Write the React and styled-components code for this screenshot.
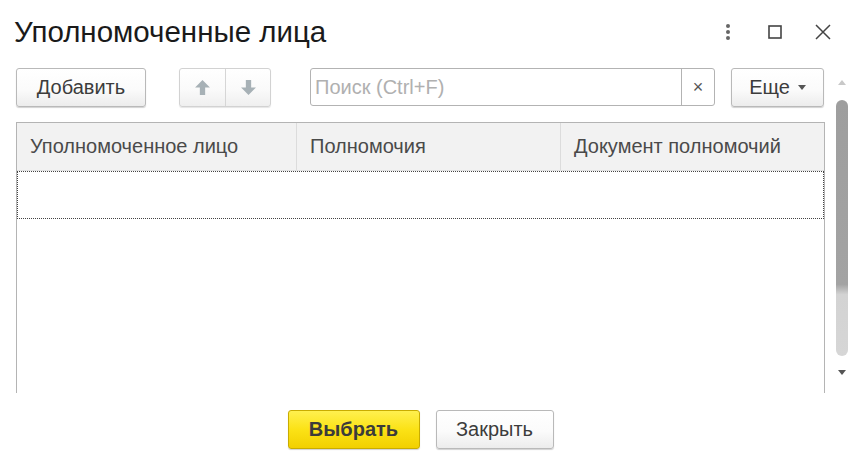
import React from "react";
import styled, { createGlobalStyle } from "styled-components";

const Global = createGlobalStyle`
  html, body { margin: 0; padding: 0; background: #fff; }
  body { font-family: "Liberation Sans", Arial, sans-serif; color: #333; }
  * { box-sizing: border-box; }
`;

const Window = styled.div`
  width: 853px;
  height: 470px;
  display: flex;
  flex-direction: column;
  background: #fff;
  overflow: hidden;
`;

const TitleBar = styled.div`
  height: 68px;
  display: flex;
  align-items: flex-start;
  padding: 14px 0 0 14px;
`;

const Title = styled.h1`
  margin: 0;
  flex: 1;
  font-weight: normal;
  font-size: 29.5px;
  line-height: 36px;
  color: #1a1a1a;
`;

const Controls = styled.div`
  display: flex;
  align-items: center;
  height: 36px;
  padding-right: 6px;
`;

const CtrlBtn = styled.div`
  width: ${(p) => p.$w || 48}px;
  height: 36px;
  display: flex;
  align-items: center;
  justify-content: center;
`;

const Main = styled.div`
  display: flex;
  height: 325px;
`;

const LeftCol = styled.div`
  width: 825px;
  padding-left: 16px;
  display: flex;
  flex-direction: column;
`;

const Toolbar = styled.div`
  height: 39px;
  display: flex;
  align-items: stretch;
`;

const Button = styled.button`
  height: 39px;
  padding: 0 ${(p) => p.$px || 10}px;
  margin-left: ${(p) => p.$ml || 0}px;
  border: 1px solid #b9b9b9;
  border-radius: 3px;
  background: linear-gradient(#ffffff 0%, #fbfbfb 55%, #ececec 100%);
  box-shadow: 0 1px 1px rgba(0, 0, 0, 0.18);
  font-family: inherit;
  font-size: 20px;
  color: #3c3c3c;
  display: flex;
  align-items: center;
  justify-content: center;
  gap: 8px;
  cursor: default;
  width: ${(p) => (p.$w ? p.$w + "px" : "auto")};
`;

const PrimaryButton = styled(Button)`
  background: linear-gradient(#fff04f 0%, #fbe216 50%, #f2d000 100%);
  border-color: #c9ac00;
  font-weight: bold;
  color: #3b3b3b;
`;

const Group = styled.div`
  margin-left: 33px;
  display: flex;
  height: 39px;
  border: 1px solid #d2d2d2;
  border-radius: 3px;
  background: linear-gradient(#ffffff 0%, #fafafa 55%, #efefef 100%);
  box-shadow: 0 1px 1px rgba(0, 0, 0, 0.1);
`;

const GroupItem = styled.div`
  width: 45px;
  display: flex;
  align-items: center;
  justify-content: center;
  & + & { border-left: 1px solid #d6d6d6; }
`;

const Search = styled.div`
  margin-left: 39px;
  width: 405px;
  height: 38px;
  display: flex;
  border: 1px solid #b3b3b3;
  border-radius: 3px;
  background: #fff;
`;

const SearchInput = styled.input`
  flex: 1;
  min-width: 0;
  border: none;
  outline: none;
  padding: 0 4px;
  font-family: inherit;
  font-size: 20px;
  color: #333;
  background: transparent;
  &::placeholder { color: #b0b0b0; }
`;

const ClearBtn = styled.div`
  width: 33px;
  border-left: 1px solid #b3b3b3;
  display: flex;
  align-items: center;
  justify-content: center;
  color: #555;
  font-size: 18px;
`;

const Table = styled.div`
  margin-top: 15px;
  flex: 1;
  border: 1px solid #b4b4b4;
  border-bottom: none;
  display: flex;
  flex-direction: column;
`;

const HeadRow = styled.div`
  display: grid;
  grid-template-columns: 279px 264px 1fr;
  height: 48px;
  background: #f2f2f2;
  border-bottom: 1px solid #e0e0e0;
`;

const HeadCell = styled.div`
  display: flex;
  align-items: center;
  padding-left: 13px;
  font-size: 20px;
  color: #4a4a4a;
  & + & { border-left: 1px solid #dcdcdc; }
`;

const Row = styled.div`
  height: 48px;
  border: 1px dotted #444;
`;

const ScrollCol = styled.div`
  flex: 1;
  display: flex;
  flex-direction: column;
  align-items: center;
  padding: 12px 0 0 6px;
`;

const Arrow = styled.div`
  width: 0;
  height: 0;
  border-left: 4px solid transparent;
  border-right: 4px solid transparent;
  ${(p) =>
    p.$up
      ? "border-bottom: 5px solid #c8c8c8;"
      : "border-top: 5px solid #555;"}
`;

const Thumb = styled.div`
  margin-top: 15px;
  width: 12px;
  height: 256px;
  border-radius: 6px;
  background: linear-gradient(#9e9e9e 0%, #a3a3a3 72%, #d3d3d3 76%, #d6d6d6 100%);
`;

const ThumbGap = styled.div`
  height: 14px;
`;

const Footer = styled.div`
  display: flex;
  width: 825px;
  padding: 17px 0 0 16px;
  justify-content: center;
  gap: 16px;
`;

const UpIcon = ({ down }) => (
  <svg width="17" height="17" viewBox="0 0 16 16" style={{ transform: down ? "rotate(180deg)" : "none" }}>
    <path d="M8 1 L15 8 L10.5 8 L10.5 15 L5.5 15 L5.5 8 L1 8 Z" fill="#a7b1b6" />
  </svg>
);

export default function App() {
  return (
    <>
      <Global />
      <Window>
        <TitleBar>
          <Title>Уполномоченные лица</Title>
          <Controls>
            <CtrlBtn $w={46}>
              <svg width="6" height="18" viewBox="0 0 6 18">
                <circle cx="3" cy="3" r="2" fill="#666" />
                <circle cx="3" cy="9" r="2" fill="#666" />
                <circle cx="3" cy="15" r="2" fill="#666" />
              </svg>
            </CtrlBtn>
            <CtrlBtn $w={48}>
              <svg width="14" height="14" viewBox="0 0 14 14">
                <rect x="1" y="1" width="12" height="12" fill="none" stroke="#444" strokeWidth="1.6" />
              </svg>
            </CtrlBtn>
            <CtrlBtn $w={48}>
              <svg width="18" height="18" viewBox="0 0 18 18">
                <path d="M2 2 L16 16 M16 2 L2 16" stroke="#444" strokeWidth="1.5" />
              </svg>
            </CtrlBtn>
          </Controls>
        </TitleBar>
        <Main>
          <LeftCol>
            <Toolbar>
              <Button $w={130}>Добавить</Button>
              <Group>
                <GroupItem><UpIcon /></GroupItem>
                <GroupItem><UpIcon down /></GroupItem>
              </Group>
              <Search>
                <SearchInput placeholder="Поиск (Ctrl+F)" />
                <ClearBtn>×</ClearBtn>
              </Search>
              <Button $ml={16} $w={93}>
                Еще
                <Arrow />
              </Button>
            </Toolbar>
            <Table>
              <HeadRow>
                <HeadCell>Уполномоченное лицо</HeadCell>
                <HeadCell>Полномочия</HeadCell>
                <HeadCell>Документ полномочий</HeadCell>
              </HeadRow>
              <Row />
            </Table>
          </LeftCol>
          <ScrollCol>
            <Arrow $up />
            <Thumb />
            <ThumbGap />
            <Arrow />
          </ScrollCol>
        </Main>
        <Footer>
          <PrimaryButton $w={132}>Выбрать</PrimaryButton>
          <Button $w={118}>Закрыть</Button>
        </Footer>
      </Window>
    </>
  );
}
